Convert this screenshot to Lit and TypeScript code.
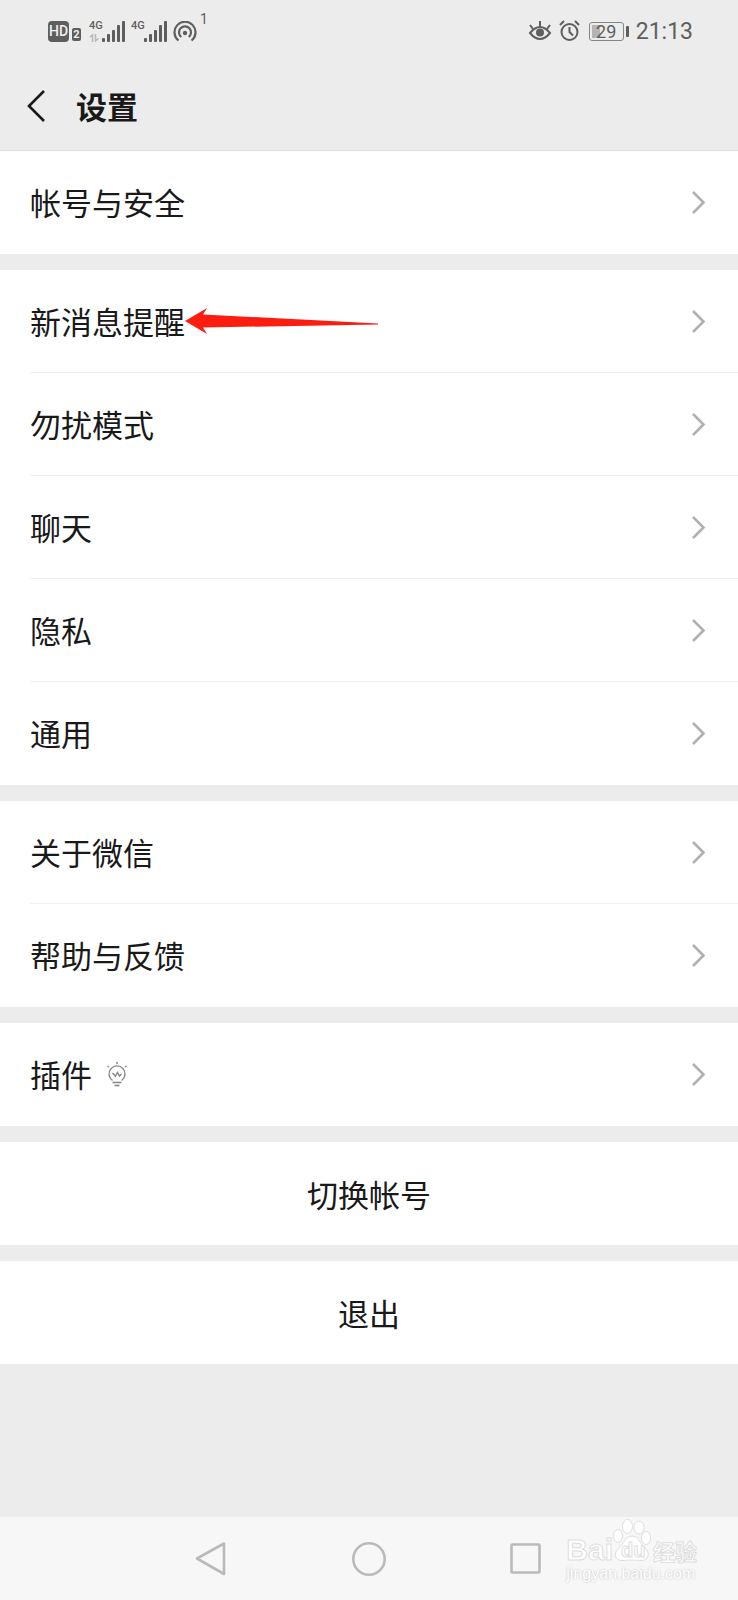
import { LitElement, html, css, svg, nothing } from "lit";
import { customElement, property } from "lit/decorators.js";

interface Item {
  label: string;
  icon?: boolean;
  pointer?: boolean;
}

const groups: Item[][] = [
  [{ label: "帐号与安全" }],
  [
    { label: "新消息提醒", pointer: true },
    { label: "勿扰模式" },
    { label: "聊天" },
    { label: "隐私" },
    { label: "通用" },
  ],
  [{ label: "关于微信" }, { label: "帮助与反馈" }],
  [{ label: "插件", icon: true }],
];

const sans = css`"Noto Sans CJK SC", "Noto Sans", sans-serif`;

@customElement("status-bar")
class StatusBar extends LitElement {
  static styles = css`
    :host {
      display: flex;
      justify-content: space-between;
      height: 62px;
      padding: 0 45px 0 48px;
      color: #5e5e5e;
      font-family: Roboto, sans-serif;
    }
    svg {
      display: block;
    }
    .side {
      display: flex;
      align-items: flex-start;
      padding-top: 21px;
    }
    .badge {
      box-sizing: border-box;
      height: 21px;
      width: 21px;
      border-radius: 4px;
      background: #5e5e5e;
      color: #f0f0f0;
      font: 500 14px/21px Roboto, sans-serif;
      text-align: center;
    }
    .sim {
      width: 9px;
      height: 13px;
      margin: 7px 8px 0 3px;
      border-radius: 2px;
      background: #5e5e5e;
      color: #f0f0f0;
      font: 700 11px/13px Roboto, sans-serif;
      text-align: center;
    }
    .signal {
      display: flex;
      margin-right: 6px;
    }
    .net {
      display: flex;
      flex-direction: column;
      gap: 4px;
      width: 13px;
      font: 500 11px/9px Roboto, sans-serif;
    }
    .count {
      margin: -9px 0 0 3px;
      font-size: 14px;
      line-height: 14px;
    }
    .right {
      gap: 7px;
      padding-top: 20px;
    }
    .battery {
      display: flex;
      align-items: center;
      gap: 2px;
      margin: 2px 0 0 2px;
    }
    .cell {
      box-sizing: border-box;
      width: 35px;
      height: 19px;
      border: 1px solid #858585;
      border-radius: 3px;
      background: linear-gradient(to right, #b4b4b4 8px, transparent 8px) 2px 2px / 30px 13px no-repeat;
      font-size: 18px;
      line-height: 18px;
      text-align: center;
    }
    .tip {
      width: 3px;
      height: 11px;
      border-radius: 1px;
      background: #5e5e5e;
    }
    .time {
      font-size: 23px;
      line-height: 24px;
    }
  `;

  private signal(data: boolean) {
    return html`<span class="signal">
      <span class="net">4G
        ${data
          ? html`<svg width="11" height="8" viewBox="0 0 11 8" fill="none" stroke="#b8b8b8" stroke-width="1.5">
              <path d="M1 3 3.500 1V8M6.500 0V7L9.500 4.500"/>
            </svg>`
          : nothing}
      </span>
      <svg width="23" height="21" viewBox="0 0 23 21" fill="#5e5e5e">
        ${[
          [0, 4],
          [5, 8],
          [10, 12],
          [15, 17],
          [20, 21],
        ].map(([x, h]) => svg`<rect x=${x} y=${21 - h} width="3" height=${h} rx="1"/>`)}
      </svg>
    </span>`;
  }

  render() {
    return html`
      <div class="side">
        <span class="badge">HD</span>
        <span class="sim">2</span>
        ${this.signal(true)}${this.signal(false)}
        <svg width="24" height="21" viewBox="0 0 24 21" fill="none" stroke="#5e5e5e" stroke-width="2.200">
          <path d="M5.500 19.500A10.500 10.500 0 1 1 18.500 19.500"/>
          <path d="M8.300 16A6 6 0 1 1 15.700 16"/>
          <circle cx="12" cy="12" r="2.200" fill="#5e5e5e" stroke="none"/>
        </svg>
        <span class="count">1</span>
      </div>
      <div class="side right">
        <svg width="24" height="21" viewBox="0 0 24 21" fill="none" stroke="#5e5e5e" stroke-width="2">
          <path d="M2 13Q12 1 22 13Q12 25 2 13Z"/>
          <circle cx="12" cy="12.500" r="4" fill="#5e5e5e" stroke="none"/>
          <path d="M12 1V7M2 5 5 9M22 5 19 9"/>
        </svg>
        <svg width="21" height="21" viewBox="0 0 21 21" fill="none" stroke="#5e5e5e" stroke-width="2">
          <circle cx="10.500" cy="12" r="8"/>
          <path d="M10.500 7V12L14 15.500M1 5 5 1M20 5 16 1"/>
        </svg>
        <span class="battery"><span class="cell">29</span><span class="tip"></span></span>
        <span class="time">21:13</span>
      </div>
    `;
  }
}

@customElement("setting-row")
class SettingRow extends LitElement {
  @property({ attribute: false }) item!: Item;

  static styles = css`
    :host {
      display: block;
      padding-left: 30px;
      background: #fff;
    }
    .row {
      box-sizing: border-box;
      display: flex;
      align-items: center;
      height: 103px;
      padding-right: 32px;
      border-bottom: 1px solid #f0f0f0;
      color: #191919;
      font: 400 31px/46px ${sans};
      text-decoration: none;
    }
    :host(.last) .row {
      border-bottom-color: transparent;
    }
    svg {
      display: block;
      flex: none;
    }
    .bulb {
      margin-left: 14px;
    }
    .chevron {
      margin-left: auto;
    }
  `;

  render() {
    const { label, icon, pointer } = this.item;
    return html`<a class="row" href="#">
      <span>${label}</span>
      ${icon
        ? html`<svg class="bulb" width="22" height="26" viewBox="0 0 22 26" fill="none" stroke="#858585" stroke-width="1.400">
            <path d="M6.500 19.500A8 8 0 1 1 15.500 19.500M6.500 21.500H15.500M8.500 24.500H13.500"/>
            <path d="M6.500 12 9.500 15 11.500 11.500 13.500 15 15.500 13M11 1V3M1.500 5 3 6M20.500 5 19 6"/>
          </svg>`
        : nothing}
      ${pointer
        ? html`<svg width="193" height="26" viewBox="0 0 193 26">
            <path d="M0 13 22 0 18 6.500 193 15.500V16.500L18 19.500 22 26Z" fill="#fb1d10"/>
          </svg>`
        : nothing}
      <svg class="chevron" width="14" height="24" viewBox="0 0 14 24" fill="none" stroke="#b0b0b0" stroke-width="2.600">
        <path d="M1 2 11.500 12.500 1 23"/>
      </svg>
    </a>`;
  }
}

@customElement("page-watermark")
class PageWatermark extends LitElement {
  static styles = css`
    :host {
      display: block;
      color: #fff;
      -webkit-text-stroke: 1px #dedede;
      pointer-events: none;
    }
    .brand {
      display: flex;
      align-items: flex-end;
      height: 42px;
    }
    .bai {
      font: 700 30px/22px "Liberation Sans", sans-serif;
    }
    .paw {
      position: relative;
      width: 38px;
      height: 42px;
    }
    svg {
      display: block;
    }
    .du {
      position: absolute;
      left: 8px;
      bottom: 1px;
      font: 700 20px/20px "Liberation Sans", sans-serif;
    }
    .cn {
      margin-left: 2px;
      font: 700 22px/22px ${sans};
    }
    .site {
      margin: 4px 0 0;
      -webkit-text-stroke: 0;
      color: #fff;
      text-shadow: 0 0 2px #b8b8b8;
      font: 400 16px/18px "Liberation Sans", sans-serif;
    }
  `;

  render() {
    return html`
      <div class="brand">
        <span class="bai">Bai</span>
        <span class="paw">
          <svg width="38" height="42" viewBox="0 0 38 42" fill="#fff" stroke="#dedede">
            <path d="M19 17C26 17 27 25 32 29C38 34 35 42 28 41.500C22 41 16 41 10 41.500C1 42 0 34 6 29C11 25 12 17 19 17Z"/>
            <ellipse cx="5" cy="17" rx="4.500" ry="6.500"/>
            <ellipse cx="14.500" cy="7.500" rx="5" ry="7"/>
            <ellipse cx="26" cy="8.500" rx="5" ry="6.500"/>
            <ellipse cx="33" cy="19" rx="4.500" ry="6.500"/>
          </svg>
          <span class="du">du</span>
        </span>
        <span class="cn">经验</span>
      </div>
      <p class="site">jingyan.baidu.com</p>
    `;
  }
}

@customElement("app-root")
class AppRoot extends LitElement {
  static styles = css`
    :host {
      display: flex;
      flex-direction: column;
      min-height: 100vh;
      background: #ececec;
      color: #191919;
      font-family: ${sans};
    }
    button {
      margin: 0;
      padding: 0;
      border: 0;
      background: none;
      color: inherit;
      font: inherit;
    }
    svg {
      display: block;
    }
    header {
      box-sizing: border-box;
      display: flex;
      align-items: center;
      gap: 31px;
      height: 89px;
      padding-left: 27px;
      border-bottom: 1px solid #dfdfdf;
    }
    h1 {
      margin: 0;
      font-size: 31px;
      line-height: 42px;
      font-weight: 700;
    }
    main {
      display: flex;
      flex-direction: column;
      gap: 16px;
      flex: 1;
    }
    main .action {
      height: 103px;
      background: #fff;
      font-size: 31px;
      line-height: 46px;
    }
    nav {
      position: relative;
      display: flex;
      justify-content: center;
      align-items: center;
      gap: 123px;
      height: 83px;
      background: #f7f7f7;
    }
    page-watermark {
      position: absolute;
      right: 41px;
      bottom: 17px;
    }
  `;

  render() {
    return html`
      <status-bar></status-bar>
      <header>
        <button aria-label="返回">
          <svg width="18" height="32" viewBox="0 0 18 32" fill="none" stroke="#191919" stroke-width="2.600">
            <path d="M17 1 2 16 17 31"/>
          </svg>
        </button>
        <h1>设置</h1>
      </header>
      <main>
        ${groups.map(
          (items) => html`<section>
            ${items.map(
              (item, i) => html`<setting-row class=${i === items.length - 1 ? "last" : ""} .item=${item}></setting-row>`,
            )}
          </section>`,
        )}
        <button class="action">切换帐号</button>
        <button class="action">退出</button>
      </main>
      <nav>
        <button aria-label="后退">
          <svg width="34" height="34" viewBox="0 0 34 34" fill="none" stroke="#bababa" stroke-width="2.600" stroke-linejoin="round">
            <path d="M2 16.500 29 1.500V32Z"/>
          </svg>
        </button>
        <button aria-label="主页">
          <svg width="34" height="34" viewBox="0 0 34 34" fill="none" stroke="#bababa" stroke-width="2.600">
            <circle cx="17" cy="17" r="15.700"/>
          </svg>
        </button>
        <button aria-label="最近任务">
          <svg width="34" height="34" viewBox="0 0 34 34" fill="none" stroke="#bababa" stroke-width="2.600">
            <rect x="2.500" y="2.500" width="28" height="28" rx="1"/>
          </svg>
        </button>
        <page-watermark></page-watermark>
      </nav>
    `;
  }
}
